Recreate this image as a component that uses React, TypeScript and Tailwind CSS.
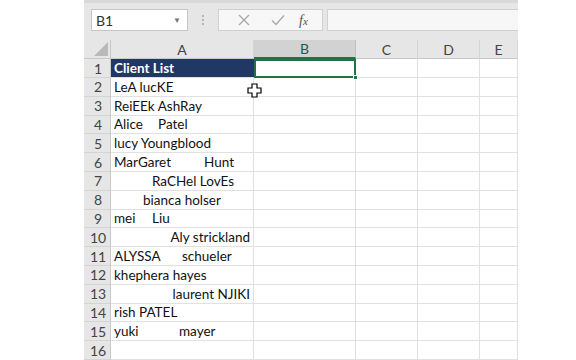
import React from "react";

type Part = { text: string; w?: string };
type Row = { n: number; pad: string; right?: boolean; parts: Part[] };

const rows: Row[] = [
  { n: 2, pad: "pl-[3px]", parts: [{ text: "LeA lucKE" }] },
  { n: 3, pad: "pl-[3px]", parts: [{ text: "ReiEEk AshRay" }] },
  { n: 4, pad: "pl-[3px]", parts: [{ text: "Alice", w: "w-[44px]" }, { text: "Patel" }] },
  { n: 5, pad: "pl-[3px]", parts: [{ text: "lucy Youngblood" }] },
  { n: 6, pad: "pl-[3px]", parts: [{ text: "MarGaret", w: "w-[90px]" }, { text: "Hunt" }] },
  { n: 7, pad: "pl-[41px]", parts: [{ text: "RaCHel LovEs" }] },
  { n: 8, pad: "pl-[32px]", parts: [{ text: "bianca holser" }] },
  { n: 9, pad: "pl-[3px]", parts: [{ text: "mei", w: "w-[38px]" }, { text: "Liu" }] },
  { n: 10, pad: "pr-[3px]", right: true, parts: [{ text: "Aly strickland" }] },
  { n: 11, pad: "pl-[3px]", parts: [{ text: "ALYSSA", w: "w-[68px]" }, { text: "schueler" }] },
  { n: 12, pad: "pl-[3px]", parts: [{ text: "khephera hayes" }] },
  { n: 13, pad: "pr-[3px]", right: true, parts: [{ text: "laurent NJIKI" }] },
  { n: 14, pad: "pl-[3px]", parts: [{ text: "rish PATEL" }] },
  { n: 15, pad: "pl-[3px]", parts: [{ text: "yuki", w: "w-[65px]" }, { text: "mayer" }] },
  { n: 16, pad: "pl-[3px]", parts: [] },
];

const cols = ["A", "B", "C", "D", "E"];

function Toolbar() {
  return (
    <div className="h-[41px] bg-[#e6e6e6] border-t-[3px] border-[#d9d9d9] flex items-start pt-[6px] pl-[7px]">
      <div className="w-[97px] h-[22px] bg-white border border-[#c6c6c6] flex items-center pl-[4px] pr-[6px] justify-between">
        <span className="text-[14px] text-[#333]">B1</span>
        <span className="text-[8px] text-[#777]">▼</span>
      </div>
      <div className="w-[30px] h-[22px] flex flex-col items-center justify-center gap-[2px]">
        <span className="w-[2px] h-[2px] bg-[#b5b5b5]" />
        <span className="w-[2px] h-[2px] bg-[#b5b5b5]" />
        <span className="w-[2px] h-[2px] bg-[#b5b5b5]" />
      </div>
      <div className="w-[105px] h-[22px] bg-[#f7f7f7] border border-[#d0d0d0] flex items-center">
        <svg width="34" height="20" viewBox="0 0 34 20" className="ml-[8px]">
          <path d="M12 5 L22 15 M22 5 L12 15" stroke="#a8a8a8" strokeWidth="1.3" fill="none" />
        </svg>
        <svg width="34" height="20" viewBox="0 0 34 20">
          <path d="M11 10.5 L15 14.5 L23 5.5" stroke="#a8a8a8" strokeWidth="1.3" fill="none" />
        </svg>
        <span className="ml-[4px] text-[14px] italic text-[#555]" style={{ fontFamily: '"Liberation Serif", serif' }}>
          f<span className="text-[11px]">x</span>
        </span>
      </div>
      <div className="ml-[4px] flex-1 h-[22px] bg-[#f7f7f7] border border-[#d0d0d0] border-r-0" />
    </div>
  );
}

function HeaderRow() {
  return (
    <>
      <div className="h-[19px] bg-[#e6e6e6] border-r border-b border-[#c8c8c8] relative">
        <svg width="14" height="14" viewBox="0 0 14 14" className="absolute right-[2px] bottom-[2px]">
          <path d="M14 0 L14 14 L0 14 Z" fill="#b9b9b9" />
        </svg>
      </div>
      {cols.map((c) =>
        c === "B" ? (
          <div
            key={c}
            className="h-[19px] bg-[#d2d2d2] border-r border-[#c0c0c0] border-b-2 border-b-[#217346] flex items-center justify-center text-[14px] text-[#1e5e3b]"
          >
            {c}
          </div>
        ) : (
          <div
            key={c}
            className="h-[19px] bg-[#e6e6e6] border-r border-b border-[#d4d4d4] border-b-[#c8c8c8] flex items-center justify-center text-[14px] text-[#444]"
          >
            {c}
          </div>
        )
      )}
    </>
  );
}

function RowHead({ n }: { n: number }) {
  return (
    <div className="h-[18.8px] bg-[#e6e6e6] border-r border-b border-[#d4d4d4] border-r-[#c8c8c8] flex items-center justify-center pl-[2px] text-[14px] text-[#444]">
      {n}
    </div>
  );
}

function Empty() {
  return <div className="h-[18.8px] border-r border-b border-[#e1e1e1] bg-white" />;
}

export default function App() {
  return (
    <div
      className="w-[576px] h-[360px] bg-white flex overflow-hidden"
      style={{ fontFamily: 'Lato, "Liberation Sans", sans-serif' }}
    >
      <div className="w-[84px] shrink-0" />
      <div className="w-[434px] shrink-0 flex flex-col relative">
        <Toolbar />
        <div className="grid grid-cols-[27px_143px_102px_62px_62px_38px]">
          <HeaderRow />

          <RowHead n={1} />
          <div className="h-[18.8px] bg-[#1f3864] border-b border-[#e1e1e1] flex items-center pl-[3px] text-[13.5px] font-bold text-white">
            Client List
          </div>
          <div className="h-[18.8px] border-2 border-[#217346] bg-white relative">
            <span className="absolute right-[-4px] bottom-[-4px] w-[5px] h-[5px] bg-[#217346] border border-white" />
          </div>
          <Empty />
          <Empty />
          <Empty />

          {rows.map((r) => (
            <React.Fragment key={r.n}>
              <RowHead n={r.n} />
              <div
                className={`h-[18.8px] border-r border-b border-[#e1e1e1] bg-white flex items-center whitespace-nowrap text-[13.5px] text-[#111] ${r.pad} ${r.right ? "justify-end" : ""}`}
              >
                {r.parts.map((p, i) => (
                  <span key={i} className={p.w ? `inline-block ${p.w}` : ""}>
                    {p.text}
                  </span>
                ))}
              </div>
              <Empty />
              <Empty />
              <Empty />
              <Empty />
            </React.Fragment>
          ))}
        </div>

        {/* mouse pointer */}
        <svg width="15" height="15" viewBox="0 0 15 15" className="absolute left-[163px] top-[83px]">
          <path
            d="M5 1 H10 V5 H14 V10 H10 V14 H5 V10 H1 V5 H5 Z"
            fill="white"
            stroke="black"
            strokeWidth="1.2"
          />
        </svg>
      </div>
      <div className="flex-1" />
    </div>
  );
}
